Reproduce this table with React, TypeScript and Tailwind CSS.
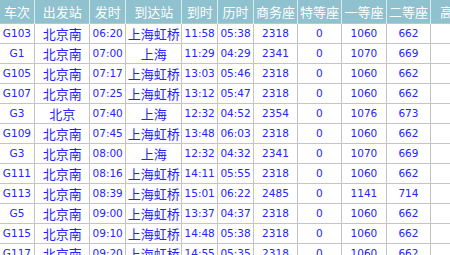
import React from 'react';

const headers = ['车次', '出发站', '发时', '到达站', '到时', '历时', '商务座', '特等座', '一等座', '二等座', '高级软卧'];
const widths = ['w-[34px]', 'w-[55px]', 'w-[35px]', 'w-[56px]', 'w-[35px]', 'w-[36px]', 'w-[43px]', 'w-[44px]', 'w-[44px]', 'w-[44px]', 'w-[70px]'];

const rows = [
    ['G103', '北京南', '06:20', '上海虹桥', '11:58', '05:38', '2318', '0', '1060', '662'],
    ['G1', '北京南', '07:00', '上海', '11:29', '04:29', '2341', '0', '1070', '669'],
    ['G105', '北京南', '07:17', '上海虹桥', '13:03', '05:46', '2318', '0', '1060', '662'],
    ['G107', '北京南', '07:25', '上海虹桥', '13:12', '05:47', '2318', '0', '1060', '662'],
    ['G3', '北京', '07:40', '上海', '12:32', '04:52', '2354', '0', '1076', '673'],
    ['G109', '北京南', '07:45', '上海虹桥', '13:48', '06:03', '2318', '0', '1060', '662'],
    ['G3', '北京南', '08:00', '上海', '12:32', '04:32', '2341', '0', '1070', '669'],
    ['G111', '北京南', '08:16', '上海虹桥', '14:11', '05:55', '2318', '0', '1060', '662'],
    ['G113', '北京南', '08:39', '上海虹桥', '15:01', '06:22', '2485', '0', '1141', '714'],
    ['G5', '北京南', '09:00', '上海虹桥', '13:37', '04:37', '2318', '0', '1060', '662'],
    ['G115', '北京南', '09:10', '上海虹桥', '14:48', '05:38', '2318', '0', '1060', '662'],
    ['G117', '北京南', '09:20', '上海虹桥', '14:55', '05:35', '2318', '0', '1060', '662'],
];

// 站名是中文，其余为数字
const cjkCols = [1, 3];

export default function App() {
    return (
        <div className="w-[450px] h-[255px] overflow-hidden bg-white">
            <table className="table-fixed border-collapse w-[502px]">
                <colgroup>
                    {widths.map((w, i) => <col key={i} className={w} />)}
                </colgroup>
                <thead>
                    <tr className="h-[23px] bg-[#8fc1ce]">
                        {headers.map((h, i) => (
                            <th
                                key={i}
                                className="p-0 border-x border-[#dcebef] text-white font-normal text-[13px] leading-none text-center whitespace-nowrap overflow-hidden first:border-l-0 font-['Noto_Sans_CJK_SC',sans-serif]"
                            >
                                {h}
                            </th>
                        ))}
                    </tr>
                </thead>
                <tbody>
                    {rows.map((r, ri) => (
                        <tr key={ri} className="h-[20px]">
                            {r.map((c, ci) => (
                                <td
                                    key={ci}
                                    className={`p-0 border border-[#c4c4c4] first:border-l-0 text-center text-[#2424ff] leading-none whitespace-nowrap ${cjkCols.includes(ci) ? "text-[13px] font-['Noto_Sans_CJK_SC',sans-serif]" : "text-[10.5px] font-['DejaVu_Sans',sans-serif]"}`}
                                >
                                    {c}
                                </td>
                            ))}
                            <td className="p-0 border border-[#c4c4c4]"></td>
                        </tr>
                    ))}
                </tbody>
            </table>
        </div>
    );
}
